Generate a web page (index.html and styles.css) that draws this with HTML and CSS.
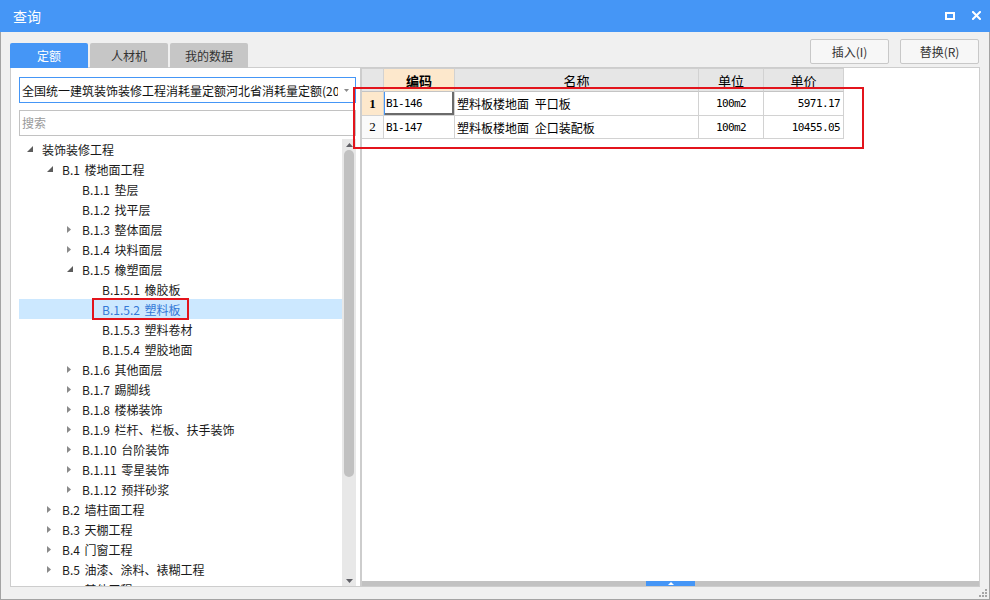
FILE: index.html
```html
<!DOCTYPE html>
<html lang="zh-CN">
<head>
<meta charset="utf-8">
<title>查询</title>
<link rel="stylesheet" href="styles.css">
</head>
<body>
<div class="window">
  <div class="titlebar">
    <span class="title">查询</span>
    <span class="tb-max"></span>
    <svg class="tb-close" width="9" height="9" viewBox="0 0 9 9"><path d="M1 1 L8 8 M8 1 L1 8" stroke="#fff" stroke-width="2" stroke-linecap="square"/></svg>
  </div>
  <div class="main">
    <div class="left">
      <div class="tabs">
        <div class="tab active">定额</div>
        <div class="tab">人材机</div>
        <div class="tab">我的数据</div>
      </div>
      <div class="panel left-panel">
        <div class="select">
          <span class="select-text">全国统一建筑装饰装修工程消耗量定额河北省消耗量定额(2012)</span>
          <svg class="select-arrow" width="5" height="3" viewBox="0 0 5 3"><polygon points="0,0 5,0 2.5,3" fill="#8a8a8a"/></svg>
        </div>
        <div class="search">搜索</div>
        <div class="tree-wrap">
          <ul class="tree">
            <li class="row lv0"><span class="tg"><svg width="6" height="6" viewBox="0 0 6 6"><polygon points="6,0 6,6 0,6" fill="#5c5c5c"/></svg></span>装饰装修工程</li>
            <li class="row lv1"><span class="tg"><svg width="6" height="6" viewBox="0 0 6 6"><polygon points="6,0 6,6 0,6" fill="#5c5c5c"/></svg></span>B.1 楼地面工程</li>
            <li class="row lv2"><span class="tg"></span>B.1.1 垫层</li>
            <li class="row lv2"><span class="tg"></span>B.1.2 找平层</li>
            <li class="row lv2"><span class="tg"><svg width="4" height="7" viewBox="0 0 4 7"><polygon points="0,0 4,3.5 0,7" fill="#8a8a8a"/></svg></span>B.1.3 整体面层</li>
            <li class="row lv2"><span class="tg"><svg width="4" height="7" viewBox="0 0 4 7"><polygon points="0,0 4,3.5 0,7" fill="#8a8a8a"/></svg></span>B.1.4 块料面层</li>
            <li class="row lv2"><span class="tg"><svg width="6" height="6" viewBox="0 0 6 6"><polygon points="6,0 6,6 0,6" fill="#5c5c5c"/></svg></span>B.1.5 橡塑面层</li>
            <li class="row lv3"><span class="tg"></span>B.1.5.1 橡胶板</li>
            <li class="row lv3 selected"><span class="tg"></span>B.1.5.2 塑料板</li>
            <li class="row lv3"><span class="tg"></span>B.1.5.3 塑料卷材</li>
            <li class="row lv3"><span class="tg"></span>B.1.5.4 塑胶地面</li>
            <li class="row lv2"><span class="tg"><svg width="4" height="7" viewBox="0 0 4 7"><polygon points="0,0 4,3.5 0,7" fill="#8a8a8a"/></svg></span>B.1.6 其他面层</li>
            <li class="row lv2"><span class="tg"><svg width="4" height="7" viewBox="0 0 4 7"><polygon points="0,0 4,3.5 0,7" fill="#8a8a8a"/></svg></span>B.1.7 踢脚线</li>
            <li class="row lv2"><span class="tg"><svg width="4" height="7" viewBox="0 0 4 7"><polygon points="0,0 4,3.5 0,7" fill="#8a8a8a"/></svg></span>B.1.8 楼梯装饰</li>
            <li class="row lv2"><span class="tg"><svg width="4" height="7" viewBox="0 0 4 7"><polygon points="0,0 4,3.5 0,7" fill="#8a8a8a"/></svg></span>B.1.9 栏杆、栏板、扶手装饰</li>
            <li class="row lv2"><span class="tg"><svg width="4" height="7" viewBox="0 0 4 7"><polygon points="0,0 4,3.5 0,7" fill="#8a8a8a"/></svg></span>B.1.10 台阶装饰</li>
            <li class="row lv2"><span class="tg"><svg width="4" height="7" viewBox="0 0 4 7"><polygon points="0,0 4,3.5 0,7" fill="#8a8a8a"/></svg></span>B.1.11 零星装饰</li>
            <li class="row lv2"><span class="tg"><svg width="4" height="7" viewBox="0 0 4 7"><polygon points="0,0 4,3.5 0,7" fill="#8a8a8a"/></svg></span>B.1.12 预拌砂浆</li>
            <li class="row lv1"><span class="tg"><svg width="4" height="7" viewBox="0 0 4 7"><polygon points="0,0 4,3.5 0,7" fill="#8a8a8a"/></svg></span>B.2 墙柱面工程</li>
            <li class="row lv1"><span class="tg"><svg width="4" height="7" viewBox="0 0 4 7"><polygon points="0,0 4,3.5 0,7" fill="#8a8a8a"/></svg></span>B.3 天棚工程</li>
            <li class="row lv1"><span class="tg"><svg width="4" height="7" viewBox="0 0 4 7"><polygon points="0,0 4,3.5 0,7" fill="#8a8a8a"/></svg></span>B.4 门窗工程</li>
            <li class="row lv1"><span class="tg"><svg width="4" height="7" viewBox="0 0 4 7"><polygon points="0,0 4,3.5 0,7" fill="#8a8a8a"/></svg></span>B.5 油漆、涂料、裱糊工程</li>
            <li class="row lv1"><span class="tg"><svg width="4" height="7" viewBox="0 0 4 7"><polygon points="0,0 4,3.5 0,7" fill="#8a8a8a"/></svg></span>B.6 其他工程</li>
          </ul>
          <div class="vscroll">
            <div class="sarrow"><svg width="7" height="4" viewBox="0 0 7 4"><polygon points="3.5,0 7,4 0,4" fill="#606066"/></svg></div>
            <div class="thumb"></div>
            <div class="sfill"></div>
            <div class="sarrow"><svg width="7" height="4" viewBox="0 0 7 4"><polygon points="0,0 7,0 3.5,4" fill="#606066"/></svg></div>
          </div>
        </div>
      </div>
    </div>
    <div class="right">
      <div class="actions">
        <button class="btn">插入(I)</button>
        <button class="btn">替换(R)</button>
      </div>
      <div class="panel right-panel">
        <div class="grid">
          <div class="c hd"></div>
          <div class="c hd sel-col">编码</div>
          <div class="c hd">名称</div>
          <div class="c hd">单位</div>
          <div class="c hd">单价</div>

          <div class="c num cur">1</div>
          <div class="c code focus">B1-146</div>
          <div class="c name">塑料板楼地面 平口板</div>
          <div class="c unit">100m2</div>
          <div class="c price">5971.17</div>

          <div class="c num r2">2</div>
          <div class="c code r2">B1-147</div>
          <div class="c name r2">塑料板楼地面 企口装配板</div>
          <div class="c unit r2">100m2</div>
          <div class="c price r2">10455.05</div>
        </div>
        <div class="hbar">
          <div class="handle"><svg width="6" height="3" viewBox="0 0 6 3"><polygon points="3,0 6,3 0,3" fill="#fff"/></svg></div>
        </div>
      </div>
    </div>
  </div>
  <div class="mark mark-table"></div>
  <div class="mark mark-tree"></div>
  <svg class="grip" width="9" height="9" viewBox="0 0 9 9">
    <rect x="7" y="1" width="2" height="2" fill="#a6a6a6"/>
    <rect x="4" y="4" width="2" height="2" fill="#a6a6a6"/>
    <rect x="7" y="4" width="2" height="2" fill="#a6a6a6"/>
    <rect x="1" y="7" width="2" height="2" fill="#a6a6a6"/>
    <rect x="4" y="7" width="2" height="2" fill="#a6a6a6"/>
    <rect x="7" y="7" width="2" height="2" fill="#a6a6a6"/>
  </svg>
</div>
</body>
</html>
```

FILE: styles.css
```css
* { box-sizing: border-box; }
html, body { margin: 0; padding: 0; }
body {
  font-family: "Noto Sans CJK SC", "Noto Sans", sans-serif;
  font-size: 12px;
  color: #1f1f1f;
  background: #f0f0f0;
}
.window {
  position: relative;
  width: 990px;
  height: 600px;
  background: #f0f0f0;
  display: flex;
  flex-direction: column;
}
.titlebar {
  height: 32px;
  flex: none;
  background: #4596f6;
  color: #fff;
  display: flex;
  align-items: center;
  padding: 0 9px 0 13px;
}
.title { font-size: 14px; line-height: 32px; }
.tb-max {
  margin-left: auto;
  width: 10px;
  height: 8px;
  border: 2px solid #fff;
  margin-top: -1px;
}
.tb-close { margin-left: 17px; margin-top: -1px; }

.main {
  flex: 1;
  display: grid;
  grid-template-columns: 351px 619px;
  padding: 0 9px 12px 9px;
  border: 1px solid #a3a3a3;
  border-top: none;
}
.left, .right { display: flex; flex-direction: column; }

.tabs {
  display: flex;
  gap: 2px;
  margin-top: 11px;
  height: 25px;
  margin-bottom: -1px;
  position: relative;
  z-index: 1;
}
.tab {
  width: 78px;
  height: 25px;
  line-height: 25px;
  text-align: center;
  background: #c6c6c6;
  color: #333;
  border-radius: 2px 2px 0 0;
  font-size: 12px;
}
.tab.active { background: #4596f6; color: #fff; }

.panel {
  height: 520px;
  border: 1px solid #cdcdcd;
  background: #fff;
}
.left-panel {
  display: flex;
  flex-direction: column;
  padding: 9px 4px 0 8px;
}
.select {
  height: 26px;
  flex: none;
  border: 1px solid #4596f6;
  display: flex;
  align-items: center;
  padding: 0 6px 0 2px;
  margin-bottom: 7px;
}
.select-text {
  flex: 1;
  min-width: 0;
  overflow: hidden;
  white-space: nowrap;
  color: #111;
  font-size: 12px;
  margin-right: 6px;
}
.select-arrow { flex: none; }
.search {
  height: 26px;
  flex: none;
  border: 1px solid #c2c2c2;
  color: #9a9a9a;
  line-height: 24px;
  padding-left: 2px;
  margin-bottom: 3px;
}
.tree-wrap {
  flex: 1;
  min-height: 0;
  display: flex;
  overflow: hidden;
}
.tree {
  list-style: none;
  margin: 0;
  padding: 0;
  flex: 1;
  min-width: 0;
  overflow: hidden;
}
.row {
  height: 20px;
  display: flex;
  align-items: center;
  white-space: pre;
  word-spacing: 2px;
  color: #1a1a1a;
}
.lv1 { padding-left: 20px; }
.lv2 { padding-left: 40px; }
.lv3 { padding-left: 60px; }
.tg {
  width: 23px;
  flex: none;
  display: flex;
  align-items: center;
  padding-left: 8px;
}
.tg svg { display: block; }
.row.selected { background: #cce8ff; color: #3478d6; }

.vscroll {
  width: 14px;
  flex: none;
  background: #e8e8e8;
  display: flex;
  flex-direction: column;
}
.sarrow {
  height: 11px;
  flex: none;
  display: flex;
  align-items: center;
  justify-content: center;
}
.sarrow svg { display: block; }
.thumb {
  height: 327px;
  margin: 0 2px;
  background: #c1c1c1;
  border-radius: 5px;
  flex: none;
}
.sfill { flex: 1; }

.actions {
  height: 35px;
  display: flex;
  justify-content: flex-end;
  gap: 11px;
  padding: 7px 1px 0 0;
}
.btn {
  width: 79px;
  height: 25px;
  border: 1px solid #c8c8c8;
  border-radius: 2px;
  background: #f7f7f7;
  color: #333;
  font-family: inherit;
  font-size: 12px;
  padding: 0;
}
.right-panel {
  display: flex;
  flex-direction: column;
}
.grid {
  display: grid;
  grid-template-columns: 22px 71px 244px 65px 80px;
  grid-template-rows: 24px 24px 23px;
  width: 482px;
}
.c {
  border-right: 1px solid #d2d2d2;
  border-bottom: 1px solid #d2d2d2;
  display: flex;
  align-items: center;
  white-space: pre;
  overflow: hidden;
  color: #000;
  font-size: 12px;
}
.hd {
  background: #e6e6e6;
  border-top: 1px solid #cfcfcf;
  border-bottom-color: #c4c4c4;
  justify-content: center;
  font-size: 13px;
}
.hd.sel-col { background: #fde8cc; font-weight: bold; }
.num {
  justify-content: center;
  font-family: "Liberation Serif", serif;
  font-size: 13px;
  background: #fafafa;
}
.num.cur { background: #fde8cc; font-weight: bold; }
.code {
  font-family: "DejaVu Sans Mono", monospace;
  font-size: 11px;
  letter-spacing: -0.6px;
  padding-left: 2px;
}
.code.focus {
  box-shadow: inset 1px 0 0 #4596f6, inset -2px -2px 0 #6b6b6b;
}
.name { padding-left: 2px; word-spacing: 3px; }
.unit {
  justify-content: center;
  font-family: "DejaVu Sans Mono", monospace;
  font-size: 11px;
  letter-spacing: -0.6px;
}
.price {
  justify-content: flex-end;
  padding-right: 3px;
  font-family: "DejaVu Sans Mono", monospace;
  font-size: 11px;
  letter-spacing: -0.6px;
}
.hbar {
  margin-top: auto;
  height: 5px;
  background: #c2c2c2;
  display: flex;
  justify-content: center;
}
.handle {
  width: 49px;
  height: 5px;
  background: #4596f6;
  display: flex;
  align-items: center;
  justify-content: center;
}
.handle svg { display: block; }

.mark {
  position: absolute;
  border: 2px solid #e3141c;
  pointer-events: none;
}
.mark-table { left: 353px; top: 87px; width: 511px; height: 62px; }
.mark-tree { left: 92px; top: 298px; width: 97px; height: 22px; }
.grip { position: absolute; right: 3px; bottom: 3px; }
```
